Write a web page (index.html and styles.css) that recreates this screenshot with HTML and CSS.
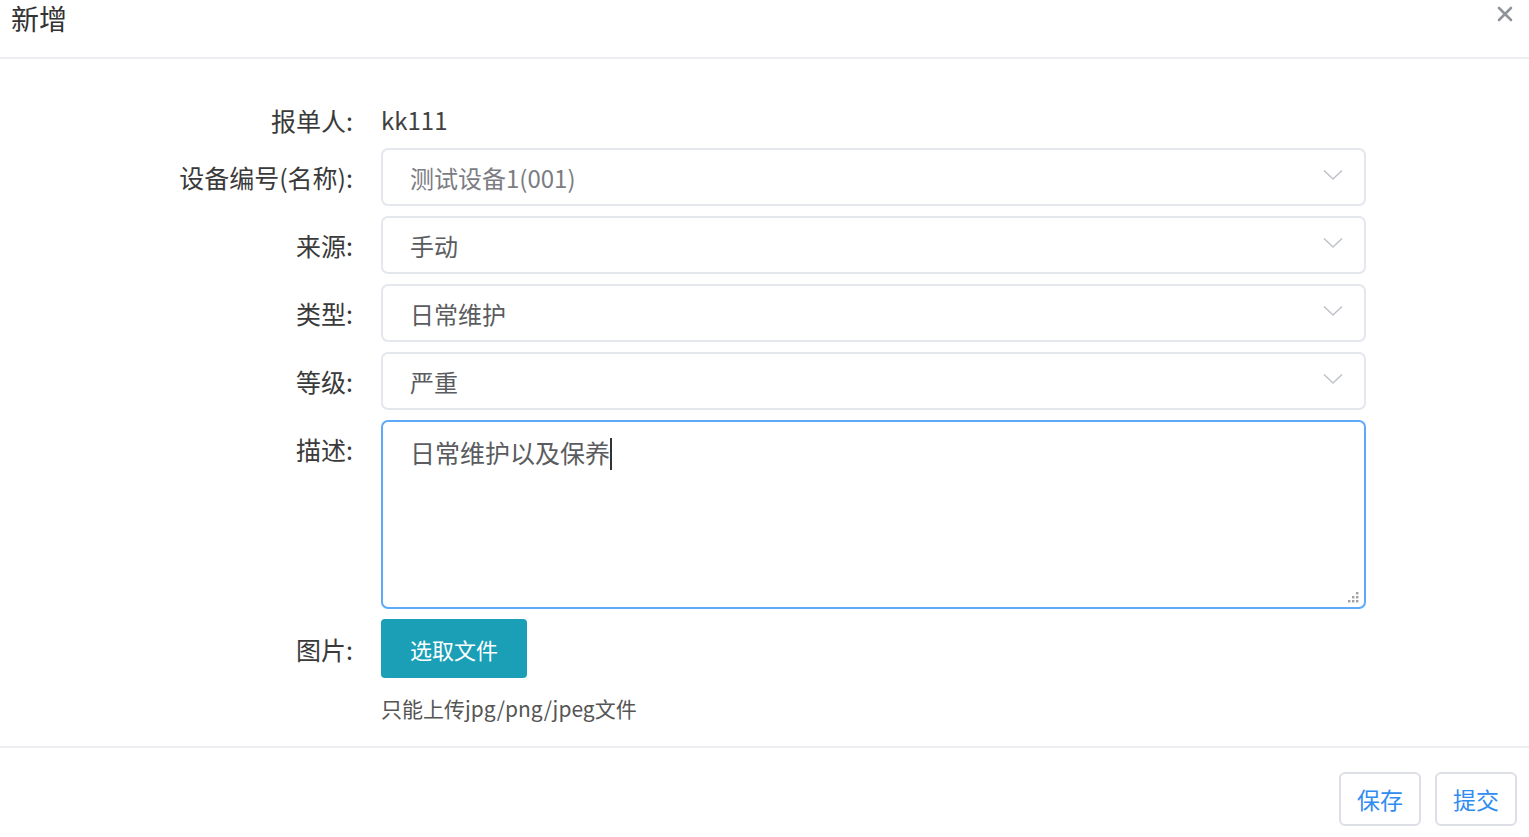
FILE: index.html
```html
<!DOCTYPE html>
<html lang="zh-CN">
<head>
<meta charset="utf-8">
<title>新增</title>
<link rel="stylesheet" href="styles.css">
</head>
<body>
<div class="dialog">
  <div class="dialog-header">
    <span class="dialog-title">新增</span>
    <svg class="close-icon" width="16" height="16" viewBox="0 0 16 16"><path d="M2 2 L14 14 M14 2 L2 14" stroke="#909399" stroke-width="2.6" stroke-linecap="round"/></svg>
  </div>
  <div class="dialog-body">
    <div class="form-item plain">
      <label class="form-label">报单人:</label>
      <div class="form-content"><span class="plain-value">kk111</span></div>
    </div>
    <div class="form-item">
      <label class="form-label">设备编号(名称):</label>
      <div class="form-content">
        <div class="select"><span class="select-value muted">测试设备1(001)</span>
          <svg class="chevron" width="20" height="12" viewBox="0 0 20 12"><path d="M1 1.5 L10 10 L19 1.5" fill="none" stroke="#c0c4cc" stroke-width="1.6"/></svg>
        </div>
      </div>
    </div>
    <div class="form-item">
      <label class="form-label">来源:</label>
      <div class="form-content">
        <div class="select"><span class="select-value">手动</span>
          <svg class="chevron" width="20" height="12" viewBox="0 0 20 12"><path d="M1 1.5 L10 10 L19 1.5" fill="none" stroke="#c0c4cc" stroke-width="1.6"/></svg>
        </div>
      </div>
    </div>
    <div class="form-item">
      <label class="form-label">类型:</label>
      <div class="form-content">
        <div class="select"><span class="select-value">日常维护</span>
          <svg class="chevron" width="20" height="12" viewBox="0 0 20 12"><path d="M1 1.5 L10 10 L19 1.5" fill="none" stroke="#c0c4cc" stroke-width="1.6"/></svg>
        </div>
      </div>
    </div>
    <div class="form-item">
      <label class="form-label">等级:</label>
      <div class="form-content">
        <div class="select"><span class="select-value">严重</span>
          <svg class="chevron" width="20" height="12" viewBox="0 0 20 12"><path d="M1 1.5 L10 10 L19 1.5" fill="none" stroke="#c0c4cc" stroke-width="1.6"/></svg>
        </div>
      </div>
    </div>
    <div class="form-item">
      <label class="form-label">描述:</label>
      <div class="form-content">
        <div class="textarea">日常维护以及保养<span class="caret"></span>
          <svg class="grip" width="14" height="14" viewBox="0 0 14 14" fill="#a0a0a0"><rect x="10" y="2" width="2.4" height="2.4"/><rect x="6" y="6" width="2.4" height="2.4"/><rect x="10" y="6" width="2.4" height="2.4"/><rect x="2" y="10" width="2.4" height="2.4"/><rect x="6" y="10" width="2.4" height="2.4"/><rect x="10" y="10" width="2.4" height="2.4"/></svg>
        </div>
      </div>
    </div>
    <div class="form-item upload-item">
      <label class="form-label">图片:</label>
      <div class="form-content">
        <button class="btn-upload" type="button">选取文件</button>
        <div class="upload-tip">只能上传jpg/png/jpeg文件</div>
      </div>
    </div>
  </div>
  <div class="dialog-footer">
    <button class="btn" type="button">保存</button>
    <button class="btn" type="button">提交</button>
  </div>
</div>
</body>
</html>
```

FILE: styles.css
```css
html, body {
  margin: 0;
  padding: 0;
  background: #fff;
}
body {
  font-family: "Noto Sans CJK SC", "Noto Sans", sans-serif;
  color: #303133;
}
.dialog {
  width: 1529px;
  height: 837px;
  display: flex;
  flex-direction: column;
}
.dialog-header {
  height: 59px;
  flex: none;
  box-sizing: border-box;
  border-bottom: 2px solid #eceef1;
  display: flex;
  justify-content: space-between;
  align-items: flex-start;
  padding: 0 16px 0 11px;
}
.dialog-title {
  font-size: 28px;
  line-height: 36px;
  color: #333;
}
.close-icon {
  margin-top: 6px;
}
.dialog-body {
  flex: none;
  padding-top: 36px;
  height: 689px;
  box-sizing: border-box;
  border-bottom: 2px solid #eceef1;
}
.form-item {
  display: flex;
  align-items: flex-start;
  margin-bottom: 10px;
}
.form-item.plain {
  margin-bottom: 3px;
}
.form-label {
  width: 353px;
  box-sizing: border-box;
  text-align: right;
  font-size: 25px;
  line-height: 58px;
  color: #3a3a3a;
  flex: none;
}
.plain .form-label {
  line-height: 50px;
}
.form-content {
  margin-left: 28px;
  width: 985px;
}
.plain-value {
  font-size: 24px;
  line-height: 50px;
  color: #404040;
}
.select {
  height: 58px;
  box-sizing: border-box;
  border: 2px solid #e4e7ed;
  border-radius: 7px;
  display: flex;
  align-items: center;
  justify-content: space-between;
  padding: 0 21px 0 27px;
}
.select-value {
  font-size: 24px;
  color: #5a5c60;
}
.select-value.muted {
  color: #7b7d82;
}
.chevron {
  margin-top: -4px;
}
.textarea {
  position: relative;
  height: 189px;
  box-sizing: border-box;
  border: 2px solid #5ea9f8;
  border-radius: 7px;
  padding: 13px 27px;
  font-size: 25px;
  line-height: 34px;
  color: #5a5c60;
}
.caret {
  display: inline-block;
  width: 2px;
  height: 32px;
  background: #333;
  vertical-align: -7px;
}
.grip {
  position: absolute;
  right: 4px;
  bottom: 3px;
}
.upload-item .form-label {
  line-height: 60px;
}
.btn-upload {
  width: 146px;
  height: 59px;
  border: none;
  border-radius: 4px;
  background: #1a9fb7;
  color: #fff;
  font-family: inherit;
  font-size: 22px;
  padding: 0;
  display: block;
}
.upload-tip {
  font-size: 21px;
  line-height: 28px;
  margin-top: 16px;
  color: #555;
}
.dialog-footer {
  display: flex;
  justify-content: flex-end;
  gap: 14px;
  padding: 24px 12px 0 0;
}
.btn {
  width: 82px;
  height: 54px;
  box-sizing: border-box;
  border: 2px solid #dcdfe6;
  border-radius: 6px;
  background: #fff;
  color: #2f8cf0;
  font-family: inherit;
  font-size: 23px;
  padding: 0;
}
```
